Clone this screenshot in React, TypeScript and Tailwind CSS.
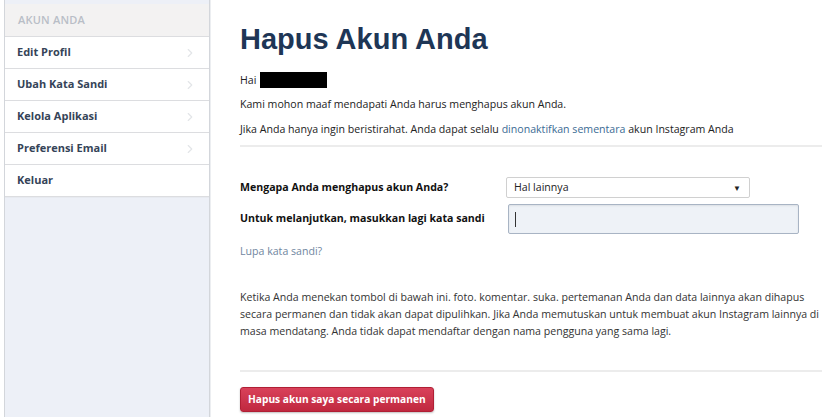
import { ChevronRight } from 'lucide-react';

const menu = [
  { label: 'Edit Profil', arrow: true },
  { label: 'Ubah Kata Sandi', arrow: true },
  { label: 'Kelola Aplikasi', arrow: true },
  { label: 'Preferensi Email', arrow: true },
  { label: 'Keluar', arrow: false },
];

export default function App() {
  return (
    <div
      className="flex h-[417px] w-[836px] overflow-hidden bg-white text-[10.6px] text-[#222]"
      style={{ fontFamily: '"Open Sans", "Noto Sans", sans-serif' }}
    >
      {/* Sidebar */}
      <aside className="ml-[4px] flex w-[206px] shrink-0 flex-col border-x border-[#d3d6db] bg-[#edf0f7] pt-[4px]">
        <div className="flex h-[33px] items-center border-b border-[#dcdde0] bg-[#f3f2f2] px-[13px] text-[11px] font-semibold tracking-[0.2px] text-[#b9bec7]">
          AKUN ANDA
        </div>
        {menu.map((item) => (
          <div
            key={item.label}
            className="flex h-[32px] items-center justify-between border-b border-[#dcdde0] bg-white px-[12px] text-[11px] font-bold text-[#354458]"
          >
            <span>{item.label}</span>
            {item.arrow && <ChevronRight className="h-[14px] w-[14px] text-[#e3e5e8]" strokeWidth={2} />}
          </div>
        ))}
        <div className="flex-1 border-t border-[#e7eaf0] bg-[#edf0f7]" />
      </aside>

      {/* Main */}
      <main className="flex-1 border-l border-[#eceef1] pl-[29px] pr-[6px]">
        <h1
          className="mt-[19px] text-[29px] font-bold leading-[40px] text-[#1e3656]"
          style={{ fontFamily: '"Liberation Sans", Arial, sans-serif' }}
        >
          Hapus Akun Anda
        </h1>
        <div className="mt-[12px] flex items-center gap-[4px] leading-[18px]">
          <span>Hai</span>
          <span className="inline-block h-[16px] w-[67px] bg-black" />
        </div>
        <p className="mt-[6px] leading-[18px]">Kami mohon maaf mendapati Anda harus menghapus akun Anda.</p>
        <p className="mt-[7px] leading-[18px]">
          Jika Anda hanya ingin beristirahat. Anda dapat selalu{' '}
          <span className="text-[#3b6b94]">dinonaktifkan sementara</span> akun Instagram Anda
        </p>
        <div className="mt-[7px] h-[2px] w-[582px] bg-[#ececec]" />

        <div className="mt-[30px] flex items-center">
          <label className="w-[266px] font-bold text-[#111]">Mengapa Anda menghapus akun Anda?</label>
          <div className="flex h-[21px] w-[244px] items-center justify-between rounded-[2px] border border-[#d0d0d0] bg-white pl-[7px] pr-[8px]">
            <span>Hal lainnya</span>
            <span className="text-[8px] text-[#222]">▼</span>
          </div>
        </div>
        <div className="mt-[6px] flex items-center">
          <label className="w-[268px] font-bold text-[#111]">Untuk melanjutkan, masukkan lagi kata sandi</label>
          <div className="flex h-[30px] w-[291px] items-center rounded-[2px] border border-[#a8b4c4] bg-[#eef2f7] pl-[6px] shadow-[inset_0_1px_2px_rgba(0,0,0,0.08)]">
            <span className="h-[15px] w-[1px] bg-[#333]" />
          </div>
        </div>
        <p className="mt-[8px] leading-[18px] text-[#6f86a0]">Lupa kata sandi?</p>

        <p className="mt-[29px] w-[589px] leading-[17px] text-[#333]">
          Ketika Anda menekan tombol di bawah ini. foto. komentar. suka. pertemanan Anda dan data lainnya akan dihapus
          secara permanen dan tidak akan dapat dipulihkan. Jika Anda memutuskan untuk membuat akun Instagram lainnya di
          masa mendatang. Anda tidak dapat mendaftar dengan nama pengguna yang sama lagi.
        </p>
        <div className="mt-[30px] h-[2px] w-[582px] bg-[#ececec]" />

        <button className="mt-[15px] h-[25px] rounded-[3px] border border-[#b01f35] bg-gradient-to-b from-[#d9415a] to-[#c0283f] px-[7px] text-[10.2px] font-bold text-white shadow-[0_1px_2px_rgba(0,0,0,0.25)]">
          Hapus akun saya secara permanen
        </button>
      </main>
    </div>
  );
}
